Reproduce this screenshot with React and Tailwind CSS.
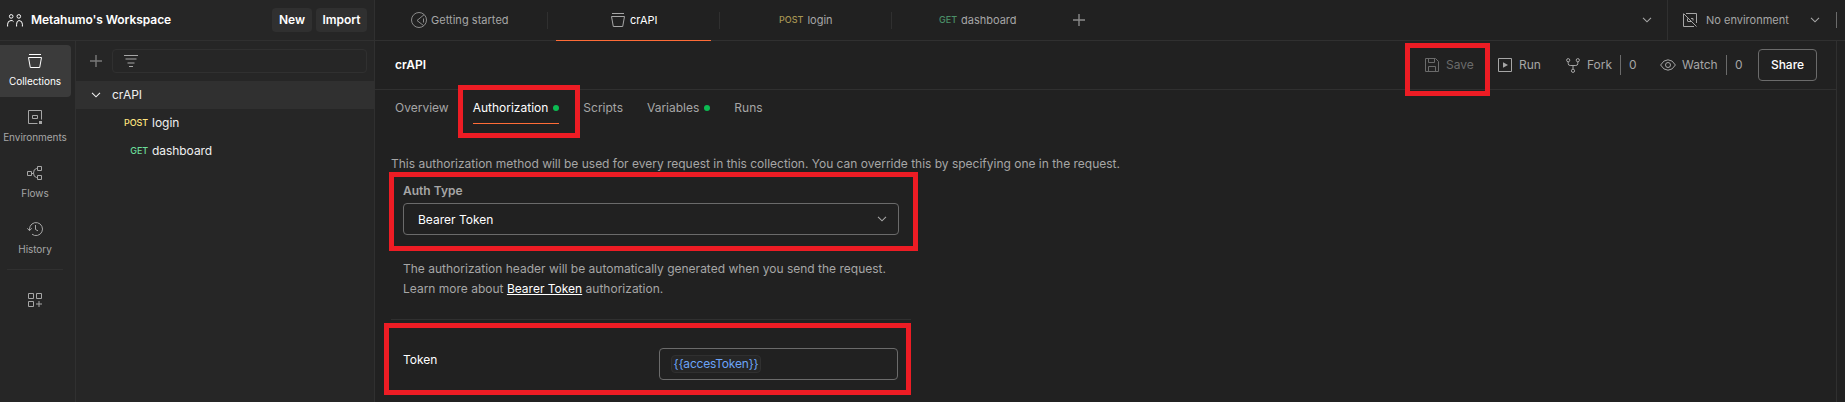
import React from "react";

const Chevron = ({ className = "" }) => (
  <svg width="10" height="6" viewBox="0 0 10 6" fill="none" stroke="currentColor" strokeWidth="1.1" className={"shrink-0 " + className}>
    <path d="M1 0.8 5 4.8 9 0.8" />
  </svg>
);

const Plus = () => (
  <svg width="12" height="12" viewBox="0 0 12 12" stroke="currentColor" strokeWidth="1.4" className="shrink-0">
    <path d="M6 0v12M0 6h12" />
  </svg>
);

const People = () => (
  <svg width="16" height="13" viewBox="0 0 16 13" fill="none" stroke="currentColor" className="shrink-0">
    <circle cx="4.2" cy="2.4" r="1.8" />
    <circle cx="11.8" cy="2.4" r="1.8" />
    <path d="M0.6 12.5V10.2Q0.6 6.8 4 6.5Q6 6.5 6.5 7.6M6 12.5M9.6 12.5V10.2Q9.6 6.800 12 6.500Q15.400 6.800 15.400 10.200V12.500" />
  </svg>
);

const Bin = () => (
  <svg width="14" height="14" viewBox="0 0 14 14" fill="none" stroke="currentColor" className="shrink-0">
    <path d="M1 0.5h12M0.5 3.5h13l-1.8 10H2.3z" />
  </svg>
);

const EnvIcon = () => (
  <svg width="14" height="14" viewBox="0 0 14 14" fill="none" stroke="currentColor" className="shrink-0">
    <path d="M9.5 13.5h-9v-13h13v9M4.5 5.5h5v3h-5z" />
    <path d="M11 11h3v3h-3z" fill="currentColor" stroke="none" />
  </svg>
);

const FlowIcon = () => (
  <svg width="16" height="14" viewBox="0 0 16 14" fill="none" stroke="currentColor" className="shrink-0">
    <path d="M0.5 5.5h4v4h-4zM10.5 0.5h4v4h-4zM10.5 9.5h4v4h-4zM10.5 2.5H9.5Q6.5 3 6.5 7Q6.5 11 9.5 11.5H10.5M4.5 7.5h2" />
  </svg>
);

const HistoryIcon = () => (
  <svg width="16" height="14" viewBox="0 0 16 14" fill="none" stroke="currentColor" className="shrink-0">
    <path d="M2.5 8.5V7A6.5 6.5 0 1 1 5 12.2M0.3 6.3l2.2 2.4 2.2-2.4M8.5 3v4.5l2.5 1.3" />
  </svg>
);

const GridIcon = () => (
  <svg width="14" height="14" viewBox="0 0 14 14" fill="none" stroke="currentColor" className="shrink-0">
    <path d="M0.5 0.5h5v5h-5zM8.5 0.5h5v5h-5zM0.5 8.5h5v5h-5zM11 8v6M8 11h6" />
  </svg>
);

const FilterIcon = () => (
  <svg width="14" height="12" viewBox="0 0 14 12" stroke="currentColor" className="shrink-0">
    <path d="M0 0.5h14M1.5 4h11M3.5 8h7M5 11.5h4" />
  </svg>
);

const Compass = () => (
  <svg width="16" height="16" viewBox="0 0 16 16" fill="none" stroke="currentColor" className="shrink-0 opacity-80">
    <circle cx="8" cy="8" r="7.5" />
    <path d="M13.2 2.6 6 8.5l6.6 5.1M12.5 6.5v4" />
  </svg>
);

const NoEnvIcon = () => (
  <svg width="14" height="14" viewBox="0 0 14 14" fill="none" stroke="currentColor" className="shrink-0">
    <path d="M3 0.5h10.5V10M11 13.5H0.5V1M0.5 0.5l13 13M4.5 8.5v-3M5 8.5h3M8 5.5h2v2" />
  </svg>
);

const SaveIcon = () => (
  <svg width="14" height="14" viewBox="0 0 14 14" fill="none" stroke="currentColor" className="shrink-0">
    <path d="M0.5 0.5h10l3 3v10h-13zM3.5 0.5v4h6v-4M3.5 13.5v-5h7v5" />
  </svg>
);

const RunIcon = () => (
  <svg width="14" height="14" viewBox="0 0 14 14" fill="none" stroke="currentColor" className="shrink-0">
    <path d="M0.5 0.5h13v13h-13z" />
    <path d="M5 4.2 10 7 5 9.8z" fill="currentColor" stroke="none" />
  </svg>
);

const ForkIcon = () => (
  <svg width="14" height="15" viewBox="0 0 14 15" fill="none" stroke="currentColor" className="shrink-0">
    <circle cx="2.2" cy="2.2" r="1.6" />
    <circle cx="11.8" cy="2.2" r="1.6" />
    <circle cx="7" cy="12.8" r="1.6" />
    <path d="M2.2 3.8V5.5Q2.2 7.5 4.2 7.5H9.8Q11.8 7.5 11.8 5.5V3.8M7 7.5v3.7" />
  </svg>
);

const EyeIcon = () => (
  <svg width="16" height="12" viewBox="0 0 16 12" fill="none" stroke="currentColor" className="shrink-0">
    <path d="M0.6 6Q3.5 0.8 8 0.8T15.4 6Q12.5 11.2 8 11.2T0.6 6z" />
    <circle cx="8" cy="6" r="2.5" />
  </svg>
);

const Dot = () => <span className="size-1.5 rounded-full bg-[#0cbb52]" />;

const RailItem = ({ icon, label, active }) => (
  <div className={"flex h-[52px] w-[71px] flex-col items-center rounded-r pt-[9px] pr-px text-[10px] leading-4 " + (active ? "bg-[#3b3b3b] text-white" : "text-[#a6a6a6]")}>
    <div className="flex h-[14px] items-center">{icon}</div>
    <div className="mt-[5px] tracking-[-0.05px]">{label}</div>
  </div>
);

const Tab = ({ active, children, last }) => (
  <div className="flex h-[41px] w-[172px] shrink-0 items-start justify-end">
    <div className={"flex h-[41px] w-[155px] items-center border-b pt-px " + (last ? "pl-[39px] " : "pl-[46px] ") + (active ? "border-[#ff6c37] text-white" : "border-transparent")}>{children}</div>
    <div className={"ml-2 mt-3 h-[17px] w-px " + (last ? "" : "bg-[#303030]")} />
  </div>
);

export default function App() {
  return (
    <div className="relative flex h-[402px] w-[1845px] overflow-hidden bg-[#212121] font-['Inter',sans-serif] text-xs leading-4 text-[#a6a6a6]">
      <aside className="flex w-[375px] shrink-0 flex-col border-r border-[#303030] bg-[#262626]">
        <div className="flex h-[41px] shrink-0 items-center border-b border-[#303030] pl-[7px] pr-[7px] text-white">
          <People />
          <span className="ml-2 font-semibold tracking-[-0.06px]">Metahumo's Workspace</span>
          <button className="ml-auto h-6 w-10 rounded bg-[#303030] font-semibold">New</button>
          <button className="ml-1 h-6 w-[51px] rounded bg-[#303030] font-semibold">Import</button>
        </div>
        <div className="flex min-h-0 flex-1">
          <nav className="flex w-[76px] flex-col gap-1 border-r border-[#303030] pt-1">
            <RailItem icon={<Bin />} label="Collections" active />
            <RailItem icon={<EnvIcon />} label="Environments" />
            <RailItem icon={<FlowIcon />} label="Flows" />
            <RailItem icon={<HistoryIcon />} label="History" />
            <div className="ml-[7px] h-px w-14 bg-[#303030]" />
            <div className="ml-7 mt-[19px] text-[#a6a6a6]"><GridIcon /></div>
          </nav>
          <div className="flex flex-1 flex-col">
            <div className="flex h-10 items-center pl-[14px] pr-[7px] text-[#7a7a7a]">
              <Plus />
              <div className="ml-[10px] flex h-6 flex-1 items-center rounded-sm border border-[#303030] pl-[11px] text-[#a6a6a6]"><FilterIcon /></div>
            </div>
            <div className="flex h-7 items-center bg-[#303030] pl-[15px] text-[#f0f0f0]">
              <Chevron />
              <span className="ml-[11px]">crAPI</span>
            </div>
            <div className="flex h-7 items-center text-[#f0f0f0]">
              <span className="w-[72px] text-right text-[9px] font-medium tracking-[-0.1px] text-[#ffe47e]">POST</span>
              <span className="ml-1">login</span>
            </div>
            <div className="flex h-7 items-center text-[#f0f0f0]">
              <span className="w-[72px] text-right text-[9px] font-medium tracking-[-0.1px] text-[#6bdd9a]">GET</span>
              <span className="ml-1 tracking-[-0.05px]">dashboard</span>
            </div>
          </div>
        </div>
      </aside>

      <main className="flex min-w-0 flex-1 flex-col">
        <div className="flex h-[41px] shrink-0 items-center border-b border-[#303030] text-[11px]">
          <div className="flex h-[41px] w-[173px] shrink-0 items-center pl-9">
            <Compass />
            <span className="ml-1 tracking-[0.03px]">Getting started</span>
            <span className="ml-auto h-[17px] w-px bg-[#303030]" />
          </div>
          <Tab active><span className="ml-[9px] text-[#a6a6a6]"><Bin /></span><span className="ml-[5px]">crAPI</span></Tab>
          <Tab><span className="ml-[5px] text-[9px] font-medium text-[#a69553]">POST</span><span className="ml-1">login</span></Tab>
          <Tab last><span className="text-[9px] font-medium text-[#4b9068]">GET</span><span className="ml-1">dashboard</span></Tab>
          <div className="ml-[9px] text-[#8a8a8a]"><Plus /></div>
          <Chevron className="ml-auto mr-[15px]" />
          <div className="flex h-10 w-[178px] items-center border-l border-[#303030] pl-[15px]">
            <NoEnvIcon />
            <span className="ml-[9px]">No environment</span>
            <Chevron className="ml-auto" />
            <span className="ml-4 mr-2 h-4 w-px bg-[#6b6b6b]" />
          </div>
        </div>
        <div className="flex min-h-0 flex-1">
          <div className="flex w-[1462px] flex-col border-r border-[#303030]">
            <div className="flex h-[49px] shrink-0 items-center border-b border-[#303030] pl-5 pr-[19px]">
              <span className="font-semibold text-white">crAPI</span>
              <div className="ml-auto flex items-center text-[#6b6b6b]"><SaveIcon /><span className="ml-[7px] w-[52px]">Save</span></div>
              <div className="flex items-center"><RunIcon /><span className="ml-[7px] w-[47px]">Run</span></div>
              <div className="flex items-center"><ForkIcon /><span className="ml-[7px] w-[33px]">Fork</span><span className="h-5 w-px bg-[#6b6b6b]" /><span className="ml-2 w-[31px]">0</span></div>
              <div className="flex items-center"><EyeIcon /><span className="ml-[6px] w-11">Watch</span><span className="h-5 w-px bg-[#6b6b6b]" /><span className="ml-2 w-[23px]">0</span></div>
              <button className="h-8 w-[59px] rounded border border-[#6b6b6b] font-medium text-white">Share</button>
            </div>
            <div className="flex h-[34px] shrink-0 items-stretch gap-6 pl-5">
              <span className="flex items-center pt-0.5">Overview</span>
              <span className="flex items-center gap-[5px] border-b border-[#ff6c37] pt-[3px] text-white">Authorization<Dot /></span>
              <span className="flex items-center pt-0.5">Scripts</span>
              <span className="flex items-center gap-[5px] pt-0.5">Variables<Dot /></span>
              <span className="flex items-center pt-0.5">Runs</span>
            </div>
            <p className="mt-8 pl-4 tracking-[-0.01px]">This authorization method will be used for every request in this collection. You can override this by specifying one in the request.</p>
            <div className="ml-7 mt-[11px] w-[496px]">
              <div className="font-semibold">Auth Type</div>
              <div className="mt-1 flex h-8 items-center rounded border border-[#6b6b6b] pl-[14px] pr-[11px] text-white">
                <span className="pt-0.5">Bearer Token</span><Chevron className="ml-auto text-[#a6a6a6]" />
              </div>
              <p className="mt-6 leading-5">The authorization header will be automatically generated when you send the request.<br />Learn more about <a className="text-white underline">Bearer Token</a> authorization.</p>
            </div>
            <div className="ml-4 mt-5 h-px w-[520px] bg-[#303030]" />
            <div className="mt-7 flex pl-7 text-white">
              <span className="mt-1 w-64">Token</span>
              <div className="flex h-8 w-[239px] items-center rounded border border-[#6b6b6b] pl-[11px]">
                <span className="-mt-px flex h-[18px] w-[90px] items-center justify-center whitespace-nowrap rounded border border-[#303030] bg-[#262626] tracking-[-0.2px] text-[#6ba4f8]">{"{{accesToken}}"}</span>
              </div>
            </div>
          </div>
        </div>
      </main>

      <div className="absolute left-[1405px] top-[43px] h-[53px] w-[85px] border-5 border-[#ed1c24]" />
      <div className="absolute left-[458px] top-[85px] h-[53px] w-[122px] border-5 border-[#ed1c24]" />
      <div className="absolute left-[389px] top-[172px] h-[79px] w-[529px] border-5 border-[#ed1c24]" />
      <div className="absolute left-[384px] top-[323px] h-[72px] w-[527px] border-5 border-[#ed1c24]" />
    </div>
  );
}
